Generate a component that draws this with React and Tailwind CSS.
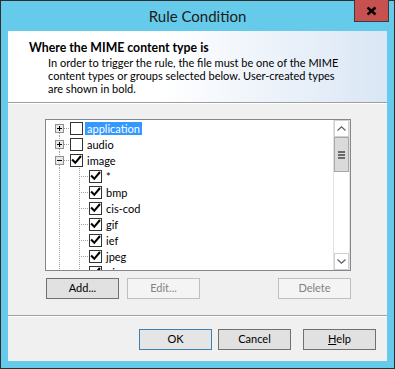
import React from "react";

const Check = () => (
  <svg width="11" height="11" viewBox="0 0 11 11" className="block">
    <path d="M1.8 5.2 L4.3 7.8 L9.3 1.8" fill="none" stroke="#000" strokeWidth="2.1" strokeLinecap="square" />
  </svg>
);

const Box = ({ checked }) => (
  <div className="w-[13px] h-[13px] border border-[#333333] bg-white flex items-center justify-center shrink-0">
    {checked ? <Check /> : null}
  </div>
);

const RootGuide = ({ open, first }) => (
  <svg width="24" height="16" viewBox="0 0 24 16" className="block shrink-0">
    <line x1="13.5" y1={first ? 12 : 0} x2="13.5" y2="4" stroke="#a0a0a0" strokeDasharray="1 1" />
    <line x1="13.5" y1="13" x2="13.5" y2="16" stroke="#a0a0a0" strokeDasharray="1 1" />
    <line x1="18" y1="8.5" x2="24" y2="8.5" stroke="#a0a0a0" strokeDasharray="1 1" />
    <rect x="9.5" y="4.5" width="8" height="8" fill="#e8e8e8" stroke="#909090" />
    <line x1="11" y1="8.5" x2="16" y2="8.5" stroke="#000" />
    {open ? null : <line x1="13.5" y1="6" x2="13.5" y2="11" stroke="#000" />}
  </svg>
);

const ChildGuide = () => (
  <svg width="43" height="16" viewBox="0 0 43 16" className="block shrink-0">
    <line x1="13.5" y1="0" x2="13.5" y2="16" stroke="#a0a0a0" strokeDasharray="1 1" />
    <line x1="33.5" y1="0" x2="33.5" y2="16" stroke="#a0a0a0" strokeDasharray="1 1" />
    <line x1="35" y1="8.5" x2="43" y2="8.5" stroke="#a0a0a0" strokeDasharray="1 1" />
  </svg>
);

const Label = ({ children, selected }) => (
  <span
    className={
      selected
        ? "ml-[2px] px-[2px] h-[13px] leading-[13px] bg-[#3399ff] text-white whitespace-nowrap"
        : "ml-[2px] px-[2px] h-[13px] leading-[13px] text-black whitespace-nowrap"
    }
  >
    {children}
  </span>
);

const RootRow = ({ label, open, first, checked, selected }) => (
  <div className="h-[16px] flex items-center shrink-0">
    <RootGuide open={open} first={first} />
    <Box checked={checked} />
    <Label selected={selected}>{label}</Label>
  </div>
);

const ChildRow = ({ label }) => (
  <div className="h-[16px] flex items-center shrink-0">
    <ChildGuide />
    <Box checked />
    <Label>{label}</Label>
  </div>
);

const Btn = ({ children, variant }) => {
  const cls =
    variant === "disabled"
      ? "w-[73px] h-[21px] flex items-center justify-center border border-[#bfbfbf] bg-[#f4f4f4] text-[#838383]"
      : variant === "default"
      ? "w-[73px] h-[21px] flex items-center justify-center border border-[#3c7fb1] bg-[#e5e5e5] text-black"
      : "w-[73px] h-[21px] flex items-center justify-center border border-[#707070] bg-[#e1e1e1] text-black";
  return <div className={cls}>{children}</div>;
};

export default function App() {
  return (
    <div className="w-[395px] h-[369px] bg-[#66cbea] border border-[#2e2e2e] flex flex-col font-['Segoe_UI','Lato',sans-serif] text-[11px] text-black">
      {/* title bar */}
      <div className="h-[30px] flex items-start relative">
        <div className="flex-1 h-[30px] flex items-center justify-center text-[15px] text-[#1b1b1b]">
          Rule Condition
        </div>
        <div className="absolute right-[5px] top-[-1px] w-[35px] h-[22px] bg-[#c75050] border border-t-0 border-[#3a3a3a] flex items-center justify-center">
          <svg width="11" height="10" viewBox="0 0 11 10">
            <path d="M1.5 1.5 L9.5 8.5 M9.5 1.5 L1.5 8.5" stroke="#000" strokeWidth="2.4" />
          </svg>
        </div>
      </div>

      {/* client */}
      <div className="mx-[7px] mb-[7px] flex-1 flex flex-col bg-[#f0f0f0]">
        {/* header */}
        <div className="h-[71px] pl-[21px] pt-[9px] bg-[linear-gradient(90deg,#ffffff_40%,#dae6f5_100%)]">
          <div className="font-bold text-[12.3px] leading-[16px] whitespace-nowrap">Where the MIME content type is</div>
          <div className="pl-[19px] leading-[13px] whitespace-nowrap">
            In order to trigger the rule, the file must be one of the MIME
            <br />
            content types or groups selected below. User-created types
            <br />
            are shown in bold.
          </div>
        </div>
        <div className="h-px bg-[#a0a0a0]" />
        <div className="h-px bg-white" />

        {/* body */}
        <div className="h-[211px] pt-[15px] pl-[37px] pr-[36px] flex flex-col">
          <div className="h-[152px] border border-[#828790] bg-white flex">
            <div className="flex-1 overflow-hidden flex flex-col">
              <RootRow label="application" first selected />
              <RootRow label="audio" />
              <RootRow label="image" open checked />
              <ChildRow label="*" />
              <ChildRow label="bmp" />
              <ChildRow label="cis-cod" />
              <ChildRow label="gif" />
              <ChildRow label="ief" />
              <ChildRow label="jpeg" />
              <ChildRow label="pjpeg" />
            </div>
            <div className="w-[17px] flex flex-col bg-white border-x border-[#e2e2e2]">
              <div className="h-[17px] border border-[#d0d0d0] flex items-center justify-center">
                <svg width="9" height="5" viewBox="0 0 9 5">
                  <path d="M0.5 4.5 L4.5 0.8 L8.5 4.5" fill="none" stroke="#606060" strokeWidth="1.2" />
                </svg>
              </div>
              <div className="h-[35px] bg-[#dadada] border border-[#a8a8a8] flex flex-col items-center justify-center gap-[1px]">
                <div className="w-[7px] h-[2px] bg-[#6a6a6a]" />
                <div className="w-[7px] h-[2px] bg-[#6a6a6a]" />
                <div className="w-[7px] h-[2px] bg-[#6a6a6a]" />
              </div>
              <div className="flex-1" />
              <div className="h-[17px] border border-[#d0d0d0] flex items-center justify-center">
                <svg width="9" height="5" viewBox="0 0 9 5">
                  <path d="M0.5 0.5 L4.5 4.2 L8.5 0.5" fill="none" stroke="#606060" strokeWidth="1.2" />
                </svg>
              </div>
            </div>
          </div>
          <div className="mt-[7px] flex pl-[1px]">
            <Btn>Add...</Btn>
            <div className="ml-[8px]">
              <Btn variant="disabled">Edit...</Btn>
            </div>
            <div className="flex-1" />
            <Btn variant="disabled">Delete</Btn>
          </div>
        </div>
        <div className="h-px bg-[#a0a0a0]" />
        <div className="h-px bg-white" />

        {/* footer */}
        <div className="flex-1 pt-[12px] pr-[11px] flex justify-end items-start">
          <Btn variant="default">OK</Btn>
          <div className="ml-[6px]">
            <Btn>Cancel</Btn>
          </div>
          <div className="ml-[12px]">
            <Btn>
              <span>
                <span className="underline">H</span>elp
              </span>
            </Btn>
          </div>
        </div>
      </div>
    </div>
  );
}
